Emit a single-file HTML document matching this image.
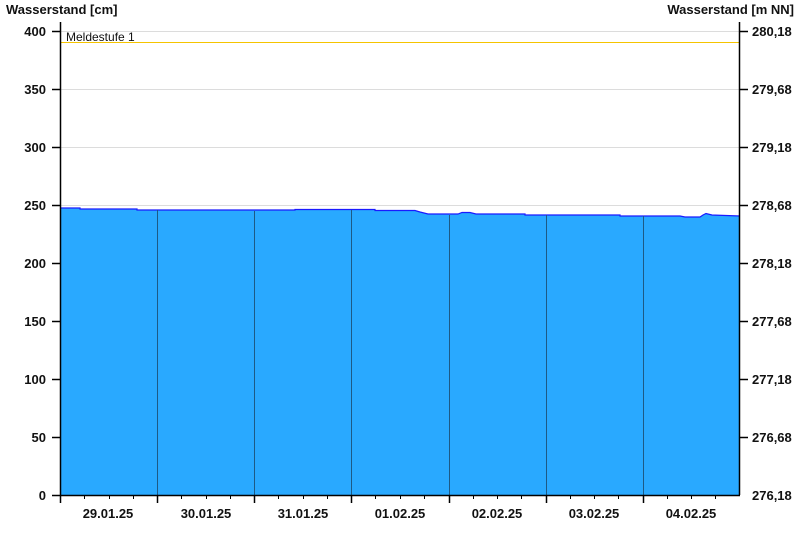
<!DOCTYPE html><html><head><style>body{margin:0;background:#fff}svg text{font-family:"Liberation Sans",Arial,sans-serif;font-weight:bold;font-size:13px;fill:#111}</style></head><body>
<svg width="800" height="550" xmlns="http://www.w3.org/2000/svg">
<rect width="800" height="550" fill="#fff"/>
<g stroke="#dcdcdc" stroke-width="1">
<line x1="60" x2="740" y1="31.5" y2="31.5"/><line x1="60" x2="740" y1="89.5" y2="89.5"/><line x1="60" x2="740" y1="147.5" y2="147.5"/><line x1="60" x2="740" y1="205.5" y2="205.5"/>
</g>
<line x1="60" x2="740" y1="42.5" y2="42.5" stroke="#f5c400"/>
<text x="66" y="41" style="font-weight:normal;font-size:12px">Meldestufe 1</text>
<polygon fill="#29a9ff" points="60,208 80,208 80,209 137,209 137,210 175,210 295,210 295,209.5 375,209.5 375,210.5 415,210.5 420,212 428,214 458,214 462,212.5 470,212.5 476,214 525,214 525,215 620,215 620,216 680,216 685,217 700,217 703,215 706,213.5 712,215 740,216 740,495 60,495"/>
<polyline fill="none" stroke="#1a1aff" stroke-width="1.2" points="60,208 80,208 80,209 137,209 137,210 175,210 295,210 295,209.5 375,209.5 375,210.5 415,210.5 420,212 428,214 458,214 462,212.5 470,212.5 476,214 525,214 525,215 620,215 620,216 680,216 685,217 700,217 703,215 706,213.5 712,215 740,216"/>
<g stroke="#1d5a85" stroke-width="1">
<line x1="157.5" x2="157.5" y1="210" y2="495"/><line x1="254.5" x2="254.5" y1="211" y2="495"/><line x1="351.5" x2="351.5" y1="210" y2="495"/><line x1="449.5" x2="449.5" y1="215" y2="495"/><line x1="546.5" x2="546.5" y1="215" y2="495"/><line x1="643.5" x2="643.5" y1="216" y2="495"/>
</g>
<g stroke="#000" stroke-width="1.5">
<line x1="60.5" y1="22" x2="60.5" y2="495"/><line x1="739.5" y1="22" x2="739.5" y2="495"/><line x1="52" y1="495.5" x2="740" y2="495.5"/>
<line x1="52" x2="60" y1="31.5" y2="31.5"/><line x1="52" x2="60" y1="89.5" y2="89.5"/><line x1="52" x2="60" y1="147.5" y2="147.5"/><line x1="52" x2="60" y1="205.5" y2="205.5"/><line x1="52" x2="60" y1="263.5" y2="263.5"/><line x1="52" x2="60" y1="321.5" y2="321.5"/><line x1="52" x2="60" y1="379.5" y2="379.5"/><line x1="52" x2="60" y1="437.5" y2="437.5"/>
<line x1="740" x2="748" y1="31.5" y2="31.5"/><line x1="740" x2="748" y1="89.5" y2="89.5"/><line x1="740" x2="748" y1="147.5" y2="147.5"/><line x1="740" x2="748" y1="205.5" y2="205.5"/><line x1="740" x2="748" y1="263.5" y2="263.5"/><line x1="740" x2="748" y1="321.5" y2="321.5"/><line x1="740" x2="748" y1="379.5" y2="379.5"/><line x1="740" x2="748" y1="437.5" y2="437.5"/>
<line x1="60.5" x2="60.5" y1="495" y2="503"/><line x1="157.5" x2="157.5" y1="495" y2="503"/><line x1="254.5" x2="254.5" y1="495" y2="503"/><line x1="351.5" x2="351.5" y1="495" y2="503"/><line x1="449.5" x2="449.5" y1="495" y2="503"/><line x1="546.5" x2="546.5" y1="495" y2="503"/><line x1="643.5" x2="643.5" y1="495" y2="503"/>
</g>
<g stroke="#000" stroke-width="1">
<path d="M84.5 495v4M109.5 495v4M133.5 495v4M181.5 495v4M206.5 495v4M230.5 495v4M278.5 495v4M303.5 495v4M327.5 495v4M375.5 495v4M400.5 495v4M424.5 495v4M473.5 495v4M497.5 495v4M521.5 495v4M570.5 495v4M594.5 495v4M618.5 495v4M667.5 495v4M691.5 495v4M715.5 495v4"/>
</g>
<text x="6" y="14">Wasserstand [cm]</text>
<text x="794" y="14" text-anchor="end">Wasserstand [m NN]</text>
<g text-anchor="end">
<text x="46" y="36">400</text><text x="46" y="94">350</text><text x="46" y="152">300</text><text x="46" y="210">250</text><text x="46" y="268">200</text><text x="46" y="326">150</text><text x="46" y="384">100</text><text x="46" y="442">50</text><text x="46" y="500">0</text>
</g>
<g>
<text x="752" y="36">280,18</text><text x="752" y="94">279,68</text><text x="752" y="152">279,18</text><text x="752" y="210">278,68</text><text x="752" y="268">278,18</text><text x="752" y="326">277,68</text><text x="752" y="384">277,18</text><text x="752" y="442">276,68</text><text x="752" y="500">276,18</text>
</g>
<g text-anchor="middle">
<text x="108" y="518">29.01.25</text><text x="206" y="518">30.01.25</text><text x="303" y="518">31.01.25</text><text x="400" y="518">01.02.25</text><text x="497" y="518">02.02.25</text><text x="594" y="518">03.02.25</text><text x="691" y="518">04.02.25</text>
</g>
</svg></body></html>
